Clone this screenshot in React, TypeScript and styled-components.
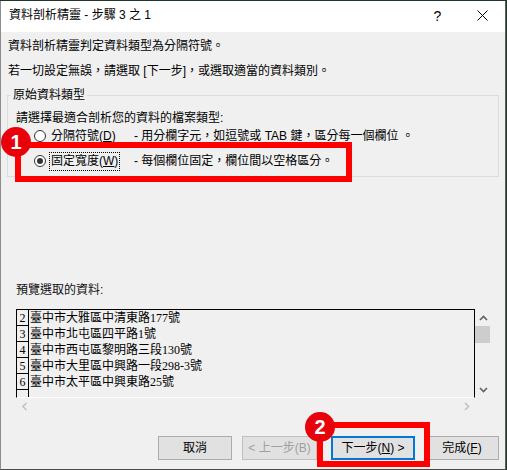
import React from 'react';
import styled, { createGlobalStyle } from 'styled-components';

const GlobalStyle = createGlobalStyle`
  html, body { margin: 0; padding: 0; background: #22372b; }
  body {
    font-family: "Liberation Sans", "Noto Sans CJK TC", sans-serif;
    font-size: 12px;
    color: #000;
    overflow: hidden;
  }
  * { box-sizing: border-box; }
`;

const Window = styled.div`
  position: relative;
  margin-top: 1px;
  width: 506px;
  height: 469px;
  background: #f0f0f0;
  border-left: 1px solid #8c8c8c;
  border-right: 1px solid #5e5e5e;
  border-bottom: 1px solid #4a4a4a;
  display: flex;
  flex-direction: column;
`;

const TitleBar = styled.div`
  height: 31px;
  background: #fff;
  display: flex;
  align-items: flex-start;
  padding-left: 8px;
  padding-top: 6px;
`;

const Title = styled.div`
  flex: 1;
  line-height: 17px;
  white-space: pre;
`;

const TitleButton = styled.div`
  width: 45px;
  height: 19px;
  margin-top: -1px;
  display: flex;
  align-items: center;
  justify-content: center;
  font-size: 14px;
  font-family: "Liberation Sans", sans-serif;
`;

const Body = styled.div`
  padding: 6px 6px 0 6px;
  display: flex;
  flex-direction: column;
`;

const Line = styled.div<{ $mt?: number }>`
  margin-left: 1px;
  margin-top: ${p => p.$mt ?? 0}px;
  line-height: 17px;
  white-space: pre;
`;

const Group = styled.fieldset`
  margin: 7px 0 0 0;
  padding: 0 0 5px 0;
  border: 1px solid #dcdcdc;
  min-width: 0;
`;

const Legend = styled.legend`
  margin-left: 3px;
  padding: 0 2px;
  line-height: 16px;
`;

const Instruction = styled.div`
  margin: 7px 0 0 8px;
  line-height: 16px;
`;

const RadioRow = styled.div<{ $mt?: number }>`
  margin: ${p => p.$mt ?? 0}px 0 0 26px;
  height: 20px;
  display: flex;
  align-items: center;
`;

const RadioCircle = styled.span<{ $checked?: boolean }>`
  width: 12px;
  height: 12px;
  border-radius: 50%;
  border: 1px solid #333;
  background: #fff;
  display: flex;
  align-items: center;
  justify-content: center;
  flex: none;
  &::after {
    content: "";
    width: 6px;
    height: 6px;
    border-radius: 50%;
    background: ${p => (p.$checked ? '#333' : 'transparent')};
  }
`;

const RadioLabelBox = styled.span`
  width: 85px;
  margin-left: 3px;
  flex: none;
  display: flex;
`;

const RadioLabel = styled.span<{ $focused?: boolean }>`
  padding: 0 1px;
  height: 19px;
  line-height: 17px;
  border: 1px dotted ${p => (p.$focused ? '#000' : 'transparent')};
  white-space: pre;
`;

const U = styled.span`
  text-decoration: underline;
`;

const Desc = styled.span`
  white-space: pre;
  line-height: 17px;
`;

const PreviewLabel = styled.div`
  margin: 105px 0 0 9px;
  line-height: 16px;
  color: #111;
`;

const Preview = styled.div`
  margin: 11px 0 0 9px;
  width: 475px;
  display: grid;
  grid-template-columns: 459px 16px;
  grid-template-rows: 89px 16px;
`;

const DataArea = styled.div`
  border-top: 1px solid #000;
  border-left: 1px solid #000;
  border-right: 1px solid #000;
  border-bottom: 1px solid #fff;
  overflow: hidden;
  display: flex;
  flex-direction: column;
  font-family: "Liberation Serif", "Noto Sans CJK TC", serif;
  font-size: 12px;
`;

const DataRow = styled.div`
  height: 16px;
  flex: none;
  display: flex;
`;

const RowNum = styled.span`
  width: 12px;
  flex: none;
  border-right: 1px solid #000;
  border-bottom: 1px solid #000;
  line-height: 17px;
  text-align: center;
  font-size: 12px;
`;

const RowText = styled.span`
  padding-left: 1px;
  line-height: 17px;
  white-space: pre;
`;

const VScroll = styled.div`
  display: flex;
  flex-direction: column;
  align-items: stretch;
`;

const ArrowCell = styled.div`
  height: 17px;
  display: flex;
  align-items: center;
  justify-content: center;
  flex: none;
`;

const Thumb = styled.div`
  height: 17px;
  width: 15px;
  background: #cdcdcd;
  flex: none;
`;

const Track = styled.div`
  flex: 1;
`;

const HScroll = styled.div`
  display: flex;
  justify-content: space-between;
  align-items: center;
`;

const HArrow = styled.div`
  width: 17px;
  height: 16px;
  display: flex;
  align-items: center;
  justify-content: center;
`;

const ButtonRow = styled.div`
  margin-top: 22px;
  display: flex;
  justify-content: flex-end;
`;

const Button = styled.div<{ $w: number; $ml: number; $disabled?: boolean; $default?: boolean }>`
  width: ${p => p.$w}px;
  height: 24px;
  margin-left: ${p => p.$ml}px;
  background: #e1e1e1;
  border: ${p => (p.$default ? '2px solid #0078d7' : p.$disabled ? '1px solid #bfbfbf' : '1px solid #adadad')};
  color: ${p => (p.$disabled ? '#a0a0a0' : '#000')};
  display: flex;
  align-items: center;
  justify-content: center;
  white-space: pre;
  line-height: 17px;
`;

const Highlight = styled.div<{ $l: number; $t: number; $w: number; $h: number }>`
  position: absolute;
  left: ${p => p.$l}px;
  top: ${p => p.$t}px;
  width: ${p => p.$w}px;
  height: ${p => p.$h}px;
  border: 6px solid #ff0000;
  pointer-events: none;
`;

const Badge = styled.div<{ $l: number; $t: number }>`
  position: absolute;
  left: ${p => p.$l}px;
  top: ${p => p.$t}px;
  width: 30px;
  height: 30px;
  border-radius: 50%;
  background: #e8000b;
  color: #fff;
  font-family: "Liberation Sans", sans-serif;
  font-weight: bold;
  font-size: 20px;
  line-height: 30px;
  text-align: center;
`;

const Chevron = ({ dir, color }: { dir: 'up' | 'down' | 'left' | 'right'; color: string }) => {
  const paths: Record<string, string> = {
    up: 'M1 5 L4.5 1.5 L8 5',
    down: 'M1 1 L4.5 4.5 L8 1',
    left: 'M4.5 1 L1 4.5 L4.5 8',
    right: 'M1 1 L4.5 4.5 L1 8',
  };
  const vertical = dir === 'up' || dir === 'down';
  return (
    <svg width={vertical ? 9 : 6} height={vertical ? 6 : 9} viewBox={vertical ? '0 0 9 6' : '0 0 6 9'}>
      <path d={paths[dir]} fill="none" stroke={color} strokeWidth="1.6" />
    </svg>
  );
};

const rows = [
  ['2', '臺中市大雅區中清東路177號'],
  ['3', '臺中市北屯區四平路1號'],
  ['4', '臺中市西屯區黎明路三段130號'],
  ['5', '臺中市大里區中興路一段298-3號'],
  ['6', '臺中市太平區中興東路25號'],
  ['', ''],
];

export default function App() {
  return (
    <>
      <GlobalStyle />
      <Window>
        <TitleBar>
          <Title>資料剖析精靈 - 步驟 3 之 1</Title>
          <TitleButton>?</TitleButton>
          <TitleButton>
            <svg width="11" height="11" viewBox="0 0 11 11">
              <path d="M0.5 0.5 L10.5 10.5 M10.5 0.5 L0.5 10.5" stroke="#000" strokeWidth="1" />
            </svg>
          </TitleButton>
        </TitleBar>
        <Body>
          <Line>資料剖析精靈判定資料類型為分隔符號。</Line>
          <Line $mt={8}>若一切設定無誤，請選取 [下一步]，或選取適當的資料類別。</Line>
          <Group>
            <Legend>原始資料類型</Legend>
            <Instruction>請選擇最適合剖析您的資料的檔案類型:</Instruction>
            <RadioRow>
              <RadioCircle />
              <RadioLabelBox>
                <RadioLabel>
                  分隔符號(<U>D</U>)
                </RadioLabel>
              </RadioLabelBox>
              <Desc>- 用分欄字元，如逗號或 TAB 鍵，區分每一個欄位 。</Desc>
            </RadioRow>
            <RadioRow $mt={5}>
              <RadioCircle $checked />
              <RadioLabelBox>
                <RadioLabel $focused>
                  固定寬度(<U>W</U>)
                </RadioLabel>
              </RadioLabelBox>
              <Desc>- 每個欄位固定，欄位間以空格區分。</Desc>
            </RadioRow>
          </Group>
          <PreviewLabel>預覽選取的資料:</PreviewLabel>
          <Preview>
            <DataArea>
              {rows.map((r, i) => (
                <DataRow key={i}>
                  <RowNum>{r[0]}</RowNum>
                  <RowText>{r[1]}</RowText>
                </DataRow>
              ))}
            </DataArea>
            <VScroll>
              <ArrowCell>
                <Chevron dir="up" color="#606060" />
              </ArrowCell>
              <Thumb />
              <Track />
              <ArrowCell>
                <Chevron dir="down" color="#606060" />
              </ArrowCell>
            </VScroll>
            <HScroll>
              <HArrow>
                <Chevron dir="left" color="#c2c2c2" />
              </HArrow>
              <HArrow>
                <Chevron dir="right" color="#c2c2c2" />
              </HArrow>
            </HScroll>
            <div />
          </Preview>
          <ButtonRow>
            <Button $w={74} $ml={0}>取消</Button>
            <Button $w={75} $ml={10} $disabled>
              {'< 上一步(B)'}
            </Button>
            <Button $w={84} $ml={14} $default>
              下一步(<U>N</U>) {'>'}
            </Button>
            <Button $w={74} $ml={10}>
              完成(<U>F</U>)
            </Button>
          </ButtonRow>
        </Body>
        <Highlight $l={14} $t={141} $w={337} $h={40} />
        <Badge $l={0} $t={126}>1</Badge>
        <Highlight $l={316} $t={421} $w={113} $h={45} />
        <Badge $l={304} $t={411}>2</Badge>
      </Window>
    </>
  );
}
